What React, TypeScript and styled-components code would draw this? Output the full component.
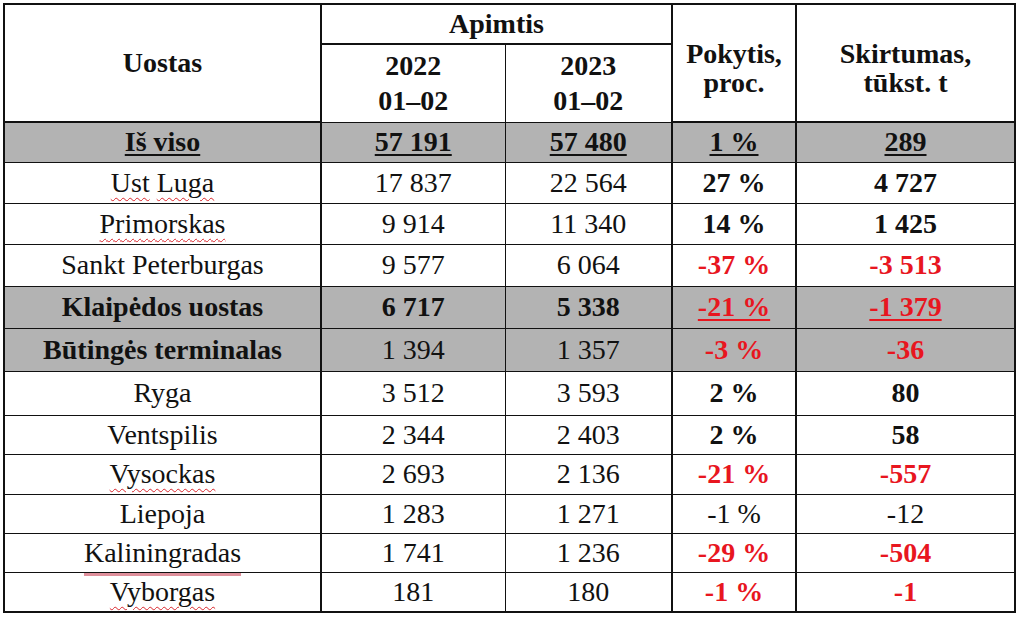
import React from "react";
import styled, { createGlobalStyle, css } from "styled-components";

const Global = createGlobalStyle`
  html, body { margin: 0; padding: 0; background: #ffffff; }
  body { font-family: "Liberation Serif", "Times New Roman", serif; color: #111; }
`;

const Page = styled.div`
  padding: 3px 0 0 3px;
`;

const Table = styled.table`
  border-collapse: collapse;
  table-layout: fixed;
  width: 1013px;
  border: 2px solid #111;
  font-size: 28px;
`;

const Row = styled.tr<{ $h: number }>`
  height: ${(p) => p.$h}px;
`;

const Head = styled.th<{ $lh?: number; $pt?: number; $thick?: boolean }>`
  font-weight: bold;
  text-align: center;
  vertical-align: middle;
  padding: ${(p) => p.$pt ?? 0}px 0 0 0;
  line-height: ${(p) => (p.$lh ? `${p.$lh}px` : "normal")};
  border: ${(p) => (p.$thick ? "2px" : "1.5px")} solid #111;
  white-space: nowrap;
`;

const Cell = styled.td<{
  $bold?: boolean;
  $red?: boolean;
  $ul?: boolean;
  $shade?: boolean;
  $thick?: boolean;
}>`
  text-align: center;
  vertical-align: middle;
  padding: 0;
  line-height: normal;
  white-space: nowrap;
  border-top: 1.5px solid #111;
  border-bottom: 1.5px solid #111;
  border-left: ${(p) => (p.$thick ? "2px" : "1px")} solid #111;
  border-right: ${(p) => (p.$thick ? "2px" : "1px")} solid #111;
  background: ${(p) => (p.$shade ? "#b3b3b3" : "#ffffff")};
  font-weight: ${(p) => (p.$bold ? "bold" : "normal")};
  color: ${(p) => (p.$red ? "#e8161f" : "#111")};
  ${(p) =>
    p.$ul &&
    css`
      text-decoration: underline;
      text-decoration-thickness: 2px;
      text-underline-offset: 3px;
    `}
`;

const Squiggle = styled.span`
  text-decoration: underline wavy #d9262c;
  text-decoration-thickness: 1px;
  text-underline-offset: 5px;
`;

const Grammar = styled.span`
  text-decoration: underline solid #df8f9b;
  text-decoration-thickness: 2.5px;
  text-underline-offset: 11px;
`;

type Data = {
  name: React.ReactNode;
  nameBold?: boolean;
  ul?: boolean;
  shade?: boolean;
  a: string;
  b: string;
  abBold?: boolean;
  p: string;
  d: string;
  pBold?: boolean;
  pRed?: boolean;
  pUl?: boolean;
  h: number;
};

const rows: Data[] = [
  { name: "Iš viso", nameBold: true, ul: true, shade: true, a: "57 191", b: "57 480", abBold: true, p: "1 %", d: "289", pBold: true, pUl: true, h: 40 },
  { name: (<><Squiggle>Ust</Squiggle> <Squiggle>Luga</Squiggle></>), a: "17 837", b: "22 564", p: "27 %", d: "4 727", pBold: true, h: 41 },
  { name: <Squiggle>Primorskas</Squiggle>, a: "9 914", b: "11 340", p: "14 %", d: "1 425", pBold: true, h: 41 },
  { name: "Sankt Peterburgas", a: "9 577", b: "6 064", p: "-37 %", d: "-3 513", pBold: true, pRed: true, h: 42 },
  { name: "Klaipėdos uostas", nameBold: true, shade: true, a: "6 717", b: "5 338", abBold: true, p: "-21 %", d: "-1 379", pBold: true, pRed: true, pUl: true, h: 42 },
  { name: "Būtingės terminalas", nameBold: true, shade: true, a: "1 394", b: "1 357", p: "-3 %", d: "-36", pBold: true, pRed: true, h: 43 },
  { name: "Ryga", a: "3 512", b: "3 593", p: "2 %", d: "80", pBold: true, h: 44 },
  { name: "Ventspilis", a: "2 344", b: "2 403", p: "2 %", d: "58", pBold: true, h: 39 },
  { name: <Squiggle>Vysockas</Squiggle>, a: "2 693", b: "2 136", p: "-21 %", d: "-557", pBold: true, pRed: true, h: 40 },
  { name: "Liepoja", a: "1 283", b: "1 271", p: "-1 %", d: "-12", h: 39 },
  { name: <Grammar>Kaliningradas</Grammar>, a: "1 741", b: "1 236", p: "-29 %", d: "-504", pBold: true, pRed: true, h: 39 },
  { name: <Squiggle>Vyborgas</Squiggle>, a: "181", b: "180", p: "-1 %", d: "-1", pBold: true, pRed: true, h: 40 },
];

export default function App() {
  return (
    <Page>
      <Global />
      <Table>
        <colgroup>
          <col style={{ width: 317 }} />
          <col style={{ width: 184 }} />
          <col style={{ width: 167 }} />
          <col style={{ width: 124 }} />
          <col style={{ width: 219 }} />
        </colgroup>
        <thead>
          <Row $h={40}>
            <Head rowSpan={2} $thick>Uostas</Head>
            <Head colSpan={2} $thick>Apimtis</Head>
            <Head rowSpan={2} $lh={29} $pt={10} $thick>
              Pokytis,
              <br />
              proc.
            </Head>
            <Head rowSpan={2} $lh={29} $pt={10} $thick>
              Skirtumas,
              <br />
              tūkst. t
            </Head>
          </Row>
          <Row $h={78}>
            <Head $lh={35} $pt={0}>
              2022
              <br />
              01–02
            </Head>
            <Head $lh={35} $pt={0}>
              2023
              <br />
              01–02
            </Head>
          </Row>
        </thead>
        <tbody>
          {rows.map((r, i) => (
            <Row key={i} $h={r.h}>
              <Cell $thick $shade={r.shade} $bold={r.nameBold} $ul={r.ul}>
                {r.name}
              </Cell>
              <Cell $shade={r.shade} $bold={r.abBold} $ul={r.ul}>
                {r.a}
              </Cell>
              <Cell $shade={r.shade} $bold={r.abBold} $ul={r.ul}>
                {r.b}
              </Cell>
              <Cell $thick $shade={r.shade} $bold={r.pBold} $red={r.pRed} $ul={r.pUl}>
                {r.p}
              </Cell>
              <Cell $thick $shade={r.shade} $bold={r.pBold} $red={r.pRed} $ul={r.pUl}>
                {r.d}
              </Cell>
            </Row>
          ))}
        </tbody>
      </Table>
    </Page>
  );
}
